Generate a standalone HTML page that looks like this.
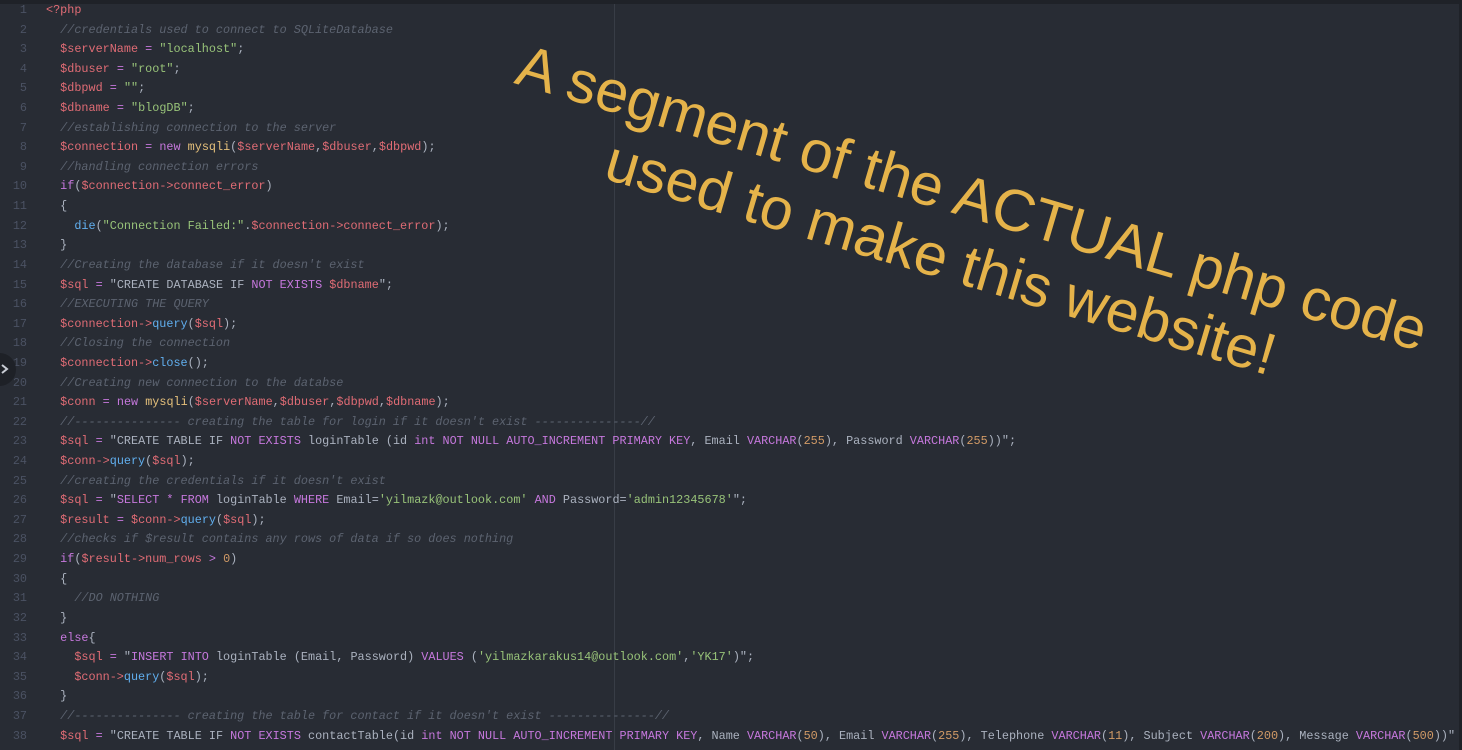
<!DOCTYPE html>
<html><head><meta charset="utf-8"><style>
html,body{margin:0;padding:0;width:1462px;height:750px;overflow:hidden;background:#282c34;}
#top{position:absolute;left:0;top:0;width:1462px;height:4px;background:#1f2228;}
#rb{position:absolute;right:0;top:0;width:3px;height:750px;background:#1f2228;}
#guide{position:absolute;left:614px;top:4px;width:1px;height:746px;background:#383d46;}
#code{position:absolute;left:0;top:1px;font-family:"Liberation Mono",monospace;font-size:11.8px;line-height:19.62px;color:#abb2bf;}
.l{position:relative;height:19.62px;white-space:pre;}
.n{display:inline-block;width:27px;text-align:right;color:#4b5263;margin-right:19px;}
.r{color:#e06c75}.g{color:#98c379}.p{color:#c678dd}.y{color:#e5c07b}.b{color:#61afef}.o{color:#d19a66}.c{color:#5c6370;font-style:italic}.w{color:#abb2bf}
#chev{position:absolute;left:-17px;top:353px;width:33px;height:33px;border-radius:50%;background:#1e2127;}
#chev svg{position:absolute;left:17px;top:10px;}
#big{position:absolute;left:528px;top:32px;width:920px;transform-origin:0 0;transform:rotate(16.5deg);font-family:"Liberation Sans",Arial,sans-serif;font-size:59px;line-height:66px;color:#e5b34a;text-align:center;white-space:nowrap;}
</style></head><body>
<div id="top"></div><div id="guide"></div><div id="rb"></div>
<div id="code">
<div class="l"><span class="n">1</span><span class="r">&lt;?php</span></div>
<div class="l"><span class="n">2</span>  <span class="c">//credentials used to connect to SQLiteDatabase</span></div>
<div class="l"><span class="n">3</span>  <span class="r">$serverName</span> <span class="p">=</span> <span class="g">"localhost"</span>;</div>
<div class="l"><span class="n">4</span>  <span class="r">$dbuser</span> <span class="p">=</span> <span class="g">"root"</span>;</div>
<div class="l"><span class="n">5</span>  <span class="r">$dbpwd</span> <span class="p">=</span> <span class="g">""</span>;</div>
<div class="l"><span class="n">6</span>  <span class="r">$dbname</span> <span class="p">=</span> <span class="g">"blogDB"</span>;</div>
<div class="l"><span class="n">7</span>  <span class="c">//establishing connection to the server</span></div>
<div class="l"><span class="n">8</span>  <span class="r">$connection</span> <span class="p">=</span> <span class="p">new</span> <span class="y">mysqli</span>(<span class="r">$serverName</span>,<span class="r">$dbuser</span>,<span class="r">$dbpwd</span>);</div>
<div class="l"><span class="n">9</span>  <span class="c">//handling connection errors</span></div>
<div class="l"><span class="n">10</span>  <span class="p">if</span>(<span class="r">$connection</span><span class="r">-&gt;</span><span class="r">connect_error</span>)</div>
<div class="l"><span class="n">11</span>  {</div>
<div class="l"><span class="n">12</span>    <span class="b">die</span>(<span class="g">"Connection Failed:"</span>.<span class="r">$connection</span><span class="r">-&gt;connect_error</span>);</div>
<div class="l"><span class="n">13</span>  }</div>
<div class="l"><span class="n">14</span>  <span class="c">//Creating the database if it doesn't exist</span></div>
<div class="l"><span class="n">15</span>  <span class="r">$sql</span> <span class="p">=</span> "CREATE DATABASE IF <span class="p">NOT EXISTS</span> <span class="r">$dbname</span>";</div>
<div class="l"><span class="n">16</span>  <span class="c">//EXECUTING THE QUERY</span></div>
<div class="l"><span class="n">17</span>  <span class="r">$connection-&gt;</span><span class="b">query</span>(<span class="r">$sql</span>);</div>
<div class="l"><span class="n">18</span>  <span class="c">//Closing the connection</span></div>
<div class="l"><span class="n">19</span>  <span class="r">$connection-&gt;</span><span class="b">close</span>();</div>
<div class="l"><span class="n">20</span>  <span class="c">//Creating new connection to the databse</span></div>
<div class="l"><span class="n">21</span>  <span class="r">$conn</span> <span class="p">=</span> <span class="p">new</span> <span class="y">mysqli</span>(<span class="r">$serverName</span>,<span class="r">$dbuser</span>,<span class="r">$dbpwd</span>,<span class="r">$dbname</span>);</div>
<div class="l"><span class="n">22</span>  <span class="c">//--------------- creating the table for login if it doesn't exist ---------------//</span></div>
<div class="l"><span class="n">23</span>  <span class="r">$sql</span> <span class="p">=</span> "CREATE TABLE IF <span class="p">NOT EXISTS</span> loginTable (id <span class="p">int NOT NULL AUTO_INCREMENT PRIMARY KEY</span>, Email <span class="p">VARCHAR</span>(<span class="o">255</span>), Password <span class="p">VARCHAR</span>(<span class="o">255</span>))";</div>
<div class="l"><span class="n">24</span>  <span class="r">$conn-&gt;</span><span class="b">query</span>(<span class="r">$sql</span>);</div>
<div class="l"><span class="n">25</span>  <span class="c">//creating the credentials if it doesn't exist</span></div>
<div class="l"><span class="n">26</span>  <span class="r">$sql</span> <span class="p">=</span> "<span class="p">SELECT * FROM</span> loginTable <span class="p">WHERE</span> Email=<span class="g">'yilmazk@outlook.com'</span> <span class="p">AND</span> Password=<span class="g">'admin12345678'</span>";</div>
<div class="l"><span class="n">27</span>  <span class="r">$result</span> <span class="p">=</span> <span class="r">$conn-&gt;</span><span class="b">query</span>(<span class="r">$sql</span>);</div>
<div class="l"><span class="n">28</span>  <span class="c">//checks if $result contains any rows of data if so does nothing</span></div>
<div class="l"><span class="n">29</span>  <span class="p">if</span>(<span class="r">$result-&gt;num_rows</span> <span class="p">&gt;</span> <span class="o">0</span>)</div>
<div class="l"><span class="n">30</span>  {</div>
<div class="l"><span class="n">31</span>    <span class="c">//DO NOTHING</span></div>
<div class="l"><span class="n">32</span>  }</div>
<div class="l"><span class="n">33</span>  <span class="p">else</span>{</div>
<div class="l"><span class="n">34</span>    <span class="r">$sql</span> <span class="p">=</span> "<span class="p">INSERT INTO</span> loginTable (Email, Password) <span class="p">VALUES</span> (<span class="g">'yilmazkarakus14@outlook.com'</span>,<span class="g">'YK17'</span>)";</div>
<div class="l"><span class="n">35</span>    <span class="r">$conn-&gt;</span><span class="b">query</span>(<span class="r">$sql</span>);</div>
<div class="l"><span class="n">36</span>  }</div>
<div class="l"><span class="n">37</span>  <span class="c">//--------------- creating the table for contact if it doesn't exist ---------------//</span></div>
<div class="l"><span class="n">38</span>  <span class="r">$sql</span> <span class="p">=</span> "CREATE TABLE IF <span class="p">NOT EXISTS</span> contactTable(id <span class="p">int NOT NULL AUTO_INCREMENT PRIMARY KEY</span>, Name <span class="p">VARCHAR</span>(<span class="o">50</span>), Email <span class="p">VARCHAR</span>(<span class="o">255</span>), Telephone <span class="p">VARCHAR</span>(<span class="o">11</span>), Subject <span class="p">VARCHAR</span>(<span class="o">200</span>), Message <span class="p">VARCHAR</span>(<span class="o">500</span>))"</div>
</div>
<div id="chev"><svg width="10" height="12" viewBox="0 0 10 12"><path d="M2 2 L7 6 L2 10" stroke="#c8ccd4" stroke-width="2" fill="none"/></svg></div>
<div id="big">A segment of the ACTUAL php code<br>used to make this website!</div>
</body></html>
